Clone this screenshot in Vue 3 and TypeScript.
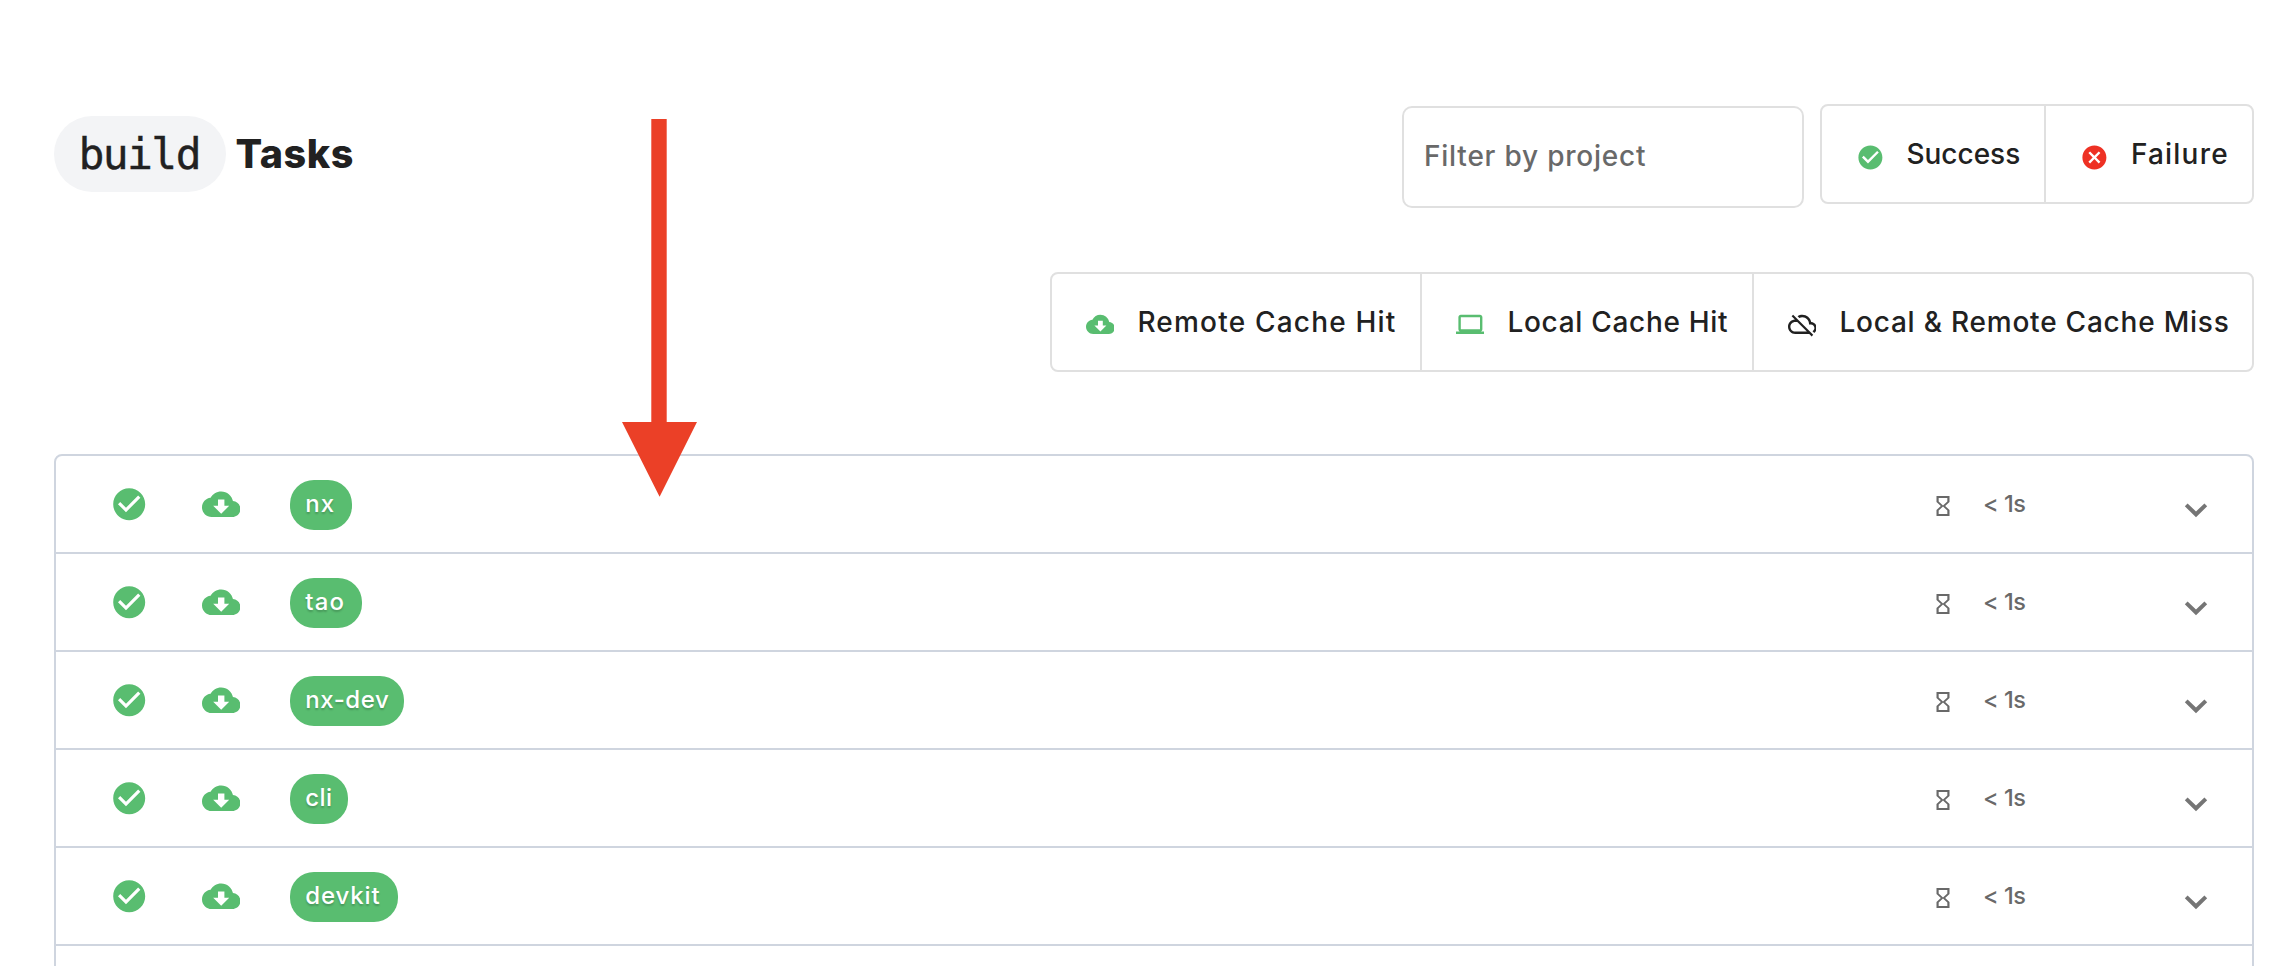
<script setup lang="ts">
interface FilterOption {
  key: string
  label: string
  icon: string
}

const icons: Record<string, string> = {
  check:
    'M12 2C6.48 2 2 6.48 2 12s4.48 10 10 10 10-4.48 10-10S17.52 2 12 2zm-2 15l-5-5 1.41-1.41L10 14.17l7.59-7.59L19 8l-9 9z',
  cancel:
    'M12 2C6.47 2 2 6.47 2 12s4.47 10 10 10 10-4.47 10-10S17.53 2 12 2zm5 13.59L15.59 17 12 13.41 8.41 17 7 15.59 10.59 12 7 8.41 8.41 7 12 10.59 15.59 7 17 8.41 13.41 12 17 15.59z',
  cloud:
    'M19.35 10.04C18.67 6.59 15.64 4 12 4 9.11 4 6.6 5.64 5.35 8.04 2.34 8.36 0 10.91 0 14c0 3.31 2.69 6 6 6h13c2.76 0 5-2.24 5-5 0-2.64-2.05-4.78-4.65-4.96zM17 13l-5 5-5-5h3V9h4v4h3z',
  laptop:
    'M20 18c1.1 0 1.99-.9 1.99-2L22 6c0-1.1-.9-2-2-2H4c-1.1 0-2 .9-2 2v10c0 1.1.9 2 2 2H0v2h24v-2h-4zM4 6h16v10H4V6z',
  cloudOff:
    'M19.35 10.04C18.67 6.59 15.64 4 12 4c-1.48 0-2.85.43-4.01 1.17l1.46 1.46C10.21 6.23 11.08 6 12 6c3.04 0 5.5 2.46 5.5 5.5v.5H19c1.66 0 3 1.34 3 3 0 1.13-.64 2.11-1.56 2.62l1.45 1.45C23.16 18.16 24 16.68 24 15c0-2.64-2.05-4.78-4.65-4.96zM3 5.27l2.75 2.74C2.56 8.15 0 10.77 0 14c0 3.31 2.69 6 6 6h11.73l2 2L21 20.73 4.27 4 3 5.27zM7.73 10l8 8H6c-2.21 0-4-1.79-4-4s1.79-4 4-4h1.73z',
  hourglass:
    'M6 2v6h.01L6 8.01 10 12l-4 4 .01.01H6V22h12v-5.99h-.01L18 16l-4-4 4-3.99-.01-.01H18V2H6zm10 14.5V20H8v-3.5l4-4 4 4zm-4-5l-4-4V4h8v3.5l-4 4z',
  chevron: 'M16.59 8.4L12 12.8 7.41 8.4 5.9 9.95l6.1 6.05 6.1-6.05z',
}

const statusOptions: FilterOption[] = [
  { key: 'success', label: 'Success', icon: 'check' },
  { key: 'failure', label: 'Failure', icon: 'cancel' },
]

const cacheOptions: FilterOption[] = [
  { key: 'remote', label: 'Remote Cache Hit', icon: 'cloud' },
  { key: 'local', label: 'Local Cache Hit', icon: 'laptop' },
  { key: 'miss', label: 'Local & Remote Cache Miss', icon: 'cloudOff' },
]

const projects: string[] = ['nx', 'tao', 'nx-dev', 'cli', 'devkit']
</script>

<template>
  <main class="page">
    <header class="header">
      <h1 class="title">
        <code class="target">build</code>
        <span class="title-text">Tasks</span>
      </h1>
      <div class="filters">
        <div class="filter-row">
          <div class="search"><span class="search-text">Filter by project</span></div>
          <div class="group">
            <button v-for="o in statusOptions" :key="o.key" class="option" :class="o.key">
              <svg class="option-icon" viewBox="0 0 24 24"><path :d="icons[o.icon]" /></svg>
              <span class="option-label">{{ o.label }}</span>
            </button>
          </div>
        </div>
        <div class="group cache">
          <button v-for="o in cacheOptions" :key="o.key" class="option" :class="o.key">
            <svg class="option-icon" viewBox="0 0 24 24"><path :d="icons[o.icon]" /></svg>
            <span class="option-label">{{ o.label }}</span>
          </button>
        </div>
      </div>
    </header>

    <section class="tasks">
      <div v-for="name in projects" :key="name" class="task">
        <svg class="state" viewBox="0 0 24 24"><path :d="icons.check" /></svg>
        <svg class="state" viewBox="0 0 24 24"><path :d="icons.cloud" /></svg>
        <span class="project" :class="'p-' + name"><span class="project-name">{{ name }}</span></span>
        <svg class="hourglass" viewBox="0 0 24 24" preserveAspectRatio="none">
          <path :d="icons.hourglass" />
        </svg>
        <span class="duration">&lt; 1s</span>
        <svg class="chevron" viewBox="0 0 24 24"><path :d="icons.chevron" /></svg>
      </div>
      <div class="task"></div>
    </section>

    <svg class="arrow" viewBox="0 0 76 378">
      <path d="M29.3 0h15.4v303H75L37.6 377.7 0 303h29.3z" />
    </svg>
  </main>
</template>

<style>
body {
  margin: 0;
  background: #fff;
}
</style>

<style scoped>
.page {
  position: relative;
  box-sizing: border-box;
  width: 2294px;
  height: 966px;
  padding: 104px 40px 0 54px;
  overflow: hidden;
  background: #fff;
  color: #212121;
  font-family: Inter, 'Liberation Sans', sans-serif;
}
.header {
  display: flex;
  justify-content: space-between;
  height: 350px;
}
.title {
  display: flex;
  align-items: center;
  gap: 9.5px;
  height: 76px;
  margin: 12px 0 0;
  font-size: 39.5px;
  font-weight: 800;
  letter-spacing: 0.5px;
}
.target {
  box-sizing: border-box;
  width: 172px;
  height: 76px;
  padding-left: 24.5px;
  border-radius: 38px;
  background: #f3f4f6;
  font: 400 43px/77px 'DejaVu Sans Mono', monospace;
  letter-spacing: -1.6px;
  -webkit-text-stroke: 0.4px #212121;
}
.title-text {
  line-height: 75px;
}
.filters {
  display: flex;
  flex-direction: column;
  align-items: flex-end;
  gap: 64px;
}
.filter-row {
  display: flex;
  gap: 16px;
  height: 104px;
}
.search {
  box-sizing: border-box;
  width: 402px;
  height: 102px;
  margin-top: 2px;
  padding-left: 20px;
  border: 2px solid #e0e0e0;
  border-radius: 10px;
  color: #696969;
  font-size: 28px;
  font-weight: 500;
  letter-spacing: 0.78px;
  line-height: 96px;
}
.group {
  display: flex;
  box-sizing: border-box;
  height: 100px;
  border: 2px solid #e0e0e0;
  border-radius: 8px;
}
.option {
  display: flex;
  align-items: center;
  box-sizing: border-box;
  height: 96px;
  padding: 0;
  border: 0;
  background: none;
  color: #212121;
  font: 500 28px/96px Inter, 'Liberation Sans', sans-serif;
  white-space: nowrap;
}
.option + .option {
  border-left: 2px solid #e0e0e0;
}
.option-icon {
  flex: none;
  width: 28.8px;
  height: 28.8px;
  margin: 6px 0 0 33.6px;
  fill: #59bd70;
}
.cache .option-icon {
  margin-top: 4px;
}
.option-label {
  margin-left: 22px;
}
.cache .option-label {
  margin-left: 23px;
}
.success { width: 222px; letter-spacing: 0; }
.failure { width: 208px; letter-spacing: 1.2px; }
.failure .option-icon { fill: #ee3124; }
.failure .option-label { margin-left: 22.5px; }
.remote { width: 368px; letter-spacing: 1.2px; }
.local { width: 332px; letter-spacing: 0.7px; }
.miss { width: 500px; letter-spacing: 0.78px; }
.miss .option-icon { fill: #212121; }
.tasks {
  border: 2px solid #cfd5df;
  border-radius: 8px;
}
.task {
  display: flex;
  align-items: center;
  box-sizing: border-box;
  height: 98px;
  padding-left: 53.8px;
  border-bottom: 2px solid #cfd5df;
}
.state {
  flex: none;
  width: 38.4px;
  height: 38.4px;
  margin-right: 53.8px;
  fill: #59bd70;
}
.project {
  box-sizing: border-box;
  height: 50px;
  margin: 2px auto 0 -4px;
  padding-left: 15px;
  border-radius: 24px;
  background: #59bd70;
  color: #fff;
  font-size: 24px;
  font-weight: 500;
  line-height: 47px;
  text-shadow: 0 2px 2px rgba(0, 0, 0, 0.2);
  white-space: nowrap;
}
.p-nx { width: 62px; letter-spacing: 1.2px; }
.p-tao { width: 72px; letter-spacing: 1.2px; }
.p-nx-dev { width: 114px; letter-spacing: 0.6px; }
.p-cli { width: 58px; letter-spacing: 0.5px; }
.p-devkit { width: 108px; letter-spacing: 0.9px; }
.hourglass {
  width: 26px;
  height: 24px;
  margin-top: 4px;
  fill: #696969;
}
.duration {
  width: 191px;
  margin-left: 27px;
  color: #696969;
  font-size: 23.5px;
  font-weight: 500;
  letter-spacing: -0.5px;
  line-height: 48px;
}
.chevron {
  width: 44px;
  height: 44px;
  margin: 12px 34px 0 0;
  fill: #757575;
}
.arrow {
  position: absolute;
  top: 119px;
  left: 622px;
  width: 76px;
  height: 378px;
  fill: #eb4027;
}
</style>
